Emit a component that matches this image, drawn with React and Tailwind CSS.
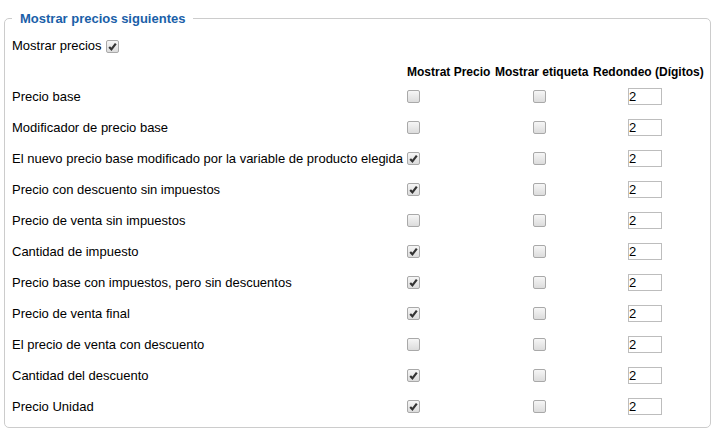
const rows = [
  ['Precio base', false],
  ['Modificador de precio base', false],
  ['El nuevo precio base modificado por la variable de producto elegida', true],
  ['Precio con descuento sin impuestos', true],
  ['Precio de venta sin impuestos', false],
  ['Cantidad de impuesto', true],
  ['Precio base con impuestos, pero sin descuentos', true],
  ['Precio de venta final', true],
  ['El precio de venta con descuento', false],
  ['Cantidad del descuento', true],
  ['Precio Unidad', true],
]

function Check({ checked }) {
  return (
    <span className="inline-flex w-[13px] h-[13px] items-center justify-center rounded-[2px] border border-[#a9a9a9] bg-gradient-to-b from-[#f6f6f6] to-[#dcdcdc]">
      {checked && (
        <svg width="9" height="9" viewBox="0 0 9 9">
          <path d="M1.2 5 L3.4 7.3 L7.8 1.6" fill="none" stroke="#333333" strokeWidth="2.2" />
        </svg>
      )}
    </span>
  )
}

export default function App() {
  return (
    <div className="w-[724px] h-[439px] bg-white font-['Liberation_Sans',Arial,sans-serif] text-[13px] text-black">
      <fieldset className="ml-[4px] mt-[11px] w-[707px] border border-[#cccccc] rounded-[5px] px-[7px] pb-[5px]">
        <legend className="px-[8px] text-[13px] leading-[15px] font-bold text-[#1a60a8]">
          Mostrar precios siguientes
        </legend>

        <div className="mt-[10px] h-[20px] flex items-center gap-[4px]">
          <span>Mostrar precios</span>
          <Check checked />
        </div>

        <div className="mt-[7px] grid grid-cols-[391px_84px_94px_109px] gap-x-[4px]">
          <div className="h-[18px]"></div>
          <div className="h-[18px] flex items-center font-bold text-[12px] whitespace-nowrap">Mostrat Precio</div>
          <div className="h-[18px] flex items-center font-bold text-[12px] whitespace-nowrap">Mostrar etiqueta</div>
          <div className="h-[18px] flex items-center font-bold text-[12px] whitespace-nowrap">Redondeo (Dígitos)</div>

          {rows.map(([label, checked]) => (
            <div key={label} className="contents">
              <div className="h-[31px] flex items-center whitespace-nowrap">{label}</div>
              <div className="h-[31px] flex items-center">
                <Check checked={checked} />
              </div>
              <div className="h-[31px] flex items-center pl-[38px]">
                <Check checked={false} />
              </div>
              <div className="h-[31px] flex items-center pl-[35px]">
                <input
                  type="text"
                  defaultValue="2"
                  className="w-[34px] h-[17px] border border-[#bdbdbd] px-0 text-[13px] leading-[15px] outline-none"
                />
              </div>
            </div>
          ))}
        </div>
      </fieldset>
    </div>
  )
}
